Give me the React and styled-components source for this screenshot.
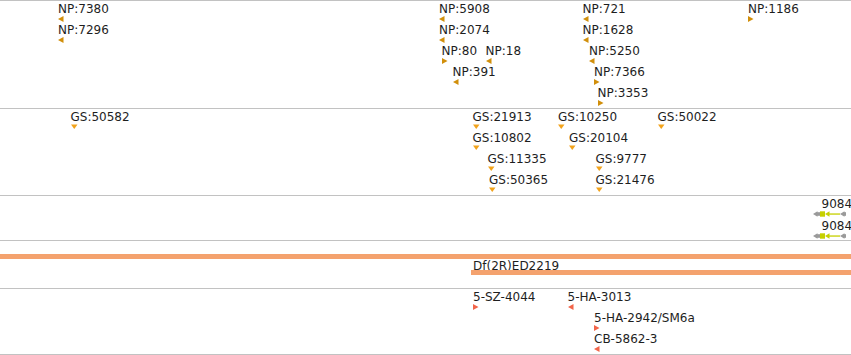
import React from "react"
import styled, { createGlobalStyle } from "styled-components"

const GlobalStyle = createGlobalStyle`
  html, body {
    margin: 0;
    padding: 0;
    background: #fff;
    overflow: hidden;
  }
  body {
    font-family: "DejaVu Sans", "Liberation Sans", sans-serif;
  }
`;

const COLORS = {
  np: "#d18f0b",
  gs: "#f2a31c",
  lab: "#f2654a",
  bar: "#f4a26e",
  gene: "#c6d000",
  geneGray: "#9a9a9a",
};

const npFeatures = [
  { label: "NP:7380", x: 58, row: 0, dir: "left" },
  { label: "NP:7296", x: 58, row: 1, dir: "left" },
  { label: "NP:5908", x: 439, row: 0, dir: "left" },
  { label: "NP:2074", x: 439, row: 1, dir: "left" },
  { label: "NP:80", x: 441.5, row: 2, dir: "right" },
  { label: "NP:18", x: 485.5, row: 2, dir: "left" },
  { label: "NP:391", x: 452.5, row: 3, dir: "left" },
  { label: "NP:721", x: 582.5, row: 0, dir: "left" },
  { label: "NP:1628", x: 582.5, row: 1, dir: "left" },
  { label: "NP:5250", x: 589, row: 2, dir: "left" },
  { label: "NP:7366", x: 594, row: 3, dir: "right" },
  { label: "NP:3353", x: 597.5, row: 4, dir: "right" },
  { label: "NP:1186", x: 748, row: 0, dir: "right" },
];

const gsFeatures = [
  { label: "GS:50582", x: 70.5, row: 0 },
  { label: "GS:21913", x: 472.5, row: 0 },
  { label: "GS:10802", x: 472.5, row: 1 },
  { label: "GS:11335", x: 487.5, row: 2 },
  { label: "GS:50365", x: 489, row: 3 },
  { label: "GS:10250", x: 558, row: 0 },
  { label: "GS:20104", x: 569, row: 1 },
  { label: "GS:9777", x: 595.5, row: 2 },
  { label: "GS:21476", x: 595.5, row: 3 },
  { label: "GS:50022", x: 657.5, row: 0 },
];

const labFeatures = [
  { label: "5-SZ-4044", x: 473, row: 0, dir: "right" },
  { label: "5-HA-3013", x: 567.5, row: 0, dir: "left" },
  { label: "5-HA-2942/SM6a", x: 594, row: 1, dir: "right" },
  { label: "CB-5862-3", x: 594, row: 2, dir: "left" },
];

// strand marker drawn under each label
function Arrow({ dir, color }) {
  if (dir === "down") {
    return (
      <ArrowSvg width="7" height="5" viewBox="0 0 7 5">
        <polygon points="0,0.5 6.5,0.5 3.25,5" fill={color} />
      </ArrowSvg>
    );
  }
  const points = dir === "left" ? "0,3 5.5,0 5.5,6" : "0,0 0,6 5.5,3";
  return (
    <ArrowSvg width="6" height="6" viewBox="0 0 6 6">
      <polygon points={points} fill={color} />
    </ArrowSvg>
  );
}

function Feature({ label, x, row, dir, color, rowHeight = 21 }) {
  return (
    <FeatureBox style={{ left: x, top: row * rowHeight + 1 }}>
      <Label>{label}</Label>
      <Arrow dir={dir} color={color} />
    </FeatureBox>
  );
}

function GeneGlyph() {
  return (
    <svg width="33" height="6" viewBox="0 0 33 6">
      <polygon points="0,3 4.5,0.3 4.5,5.7" fill={COLORS.geneGray} />
      <rect x="4" y="1.2" width="3.5" height="3.6" fill={COLORS.geneGray} />
      <rect x="7" y="0.3" width="5" height="5.4" fill={COLORS.gene} />
      <polygon points="12,3 16.5,0.3 16.5,5.7" fill={COLORS.gene} />
      <rect x="16" y="2.4" width="11" height="1.3" fill={COLORS.gene} />
      <polygon points="27,3 31.5,0.3 31.5,5.7" fill={COLORS.geneGray} />
      <rect x="31" y="1.2" width="2" height="3.6" fill={COLORS.geneGray} />
    </svg>
  );
}

export default function App() {
  return (
    <Page>
      <GlobalStyle />
      <Track $height={107}>
        {npFeatures.map((f) => (
          <Feature key={f.label + f.x} {...f} color={COLORS.np} />
        ))}
      </Track>
      <Track $height={86}>
        {gsFeatures.map((f) => (
          <Feature key={f.label} {...f} dir="down" color={COLORS.gs} />
        ))}
      </Track>
      <Track $height={44}>
        <GeneStack>
          {[0, 1].map((row) => (
            <GeneRow key={row}>
              <GeneLabel>9084</GeneLabel>
              <GeneGlyph />
            </GeneRow>
          ))}
        </GeneStack>
      </Track>
      <Track $height={47}>
        <Bar $top={13} $left={0} />
        <BarLabel>Df(2R)ED2219</BarLabel>
        <Bar $top={29} $left={471} />
      </Track>
      <Track $height={65} $last>
        {labFeatures.map((f) => (
          <Feature key={f.label} {...f} color={COLORS.lab} />
        ))}
      </Track>
    </Page>
  );
}

const Page = styled.div`
  width: 851px;
  height: 355px;
  display: flex;
  flex-direction: column;
  background: #fff;
`;

const Track = styled.div`
  position: relative;
  height: ${(p) => p.$height}px;
  flex: none;
  border-top: 1px solid #c2c2c2;
  border-bottom: ${(p) => (p.$last ? "1px solid #c2c2c2" : "none")};
  overflow: hidden;
`;

const FeatureBox = styled.div`
  position: absolute;
  display: flex;
  flex-direction: column;
  align-items: flex-start;
`;

const Label = styled.span`
  font-size: 12px;
  line-height: 14px;
  color: #1e1e1e;
  white-space: nowrap;
`;

const ArrowSvg = styled.svg`
  display: block;
`;

const GeneStack = styled.div`
  display: flex;
  flex-direction: column;
  gap: 2px;
  padding: 1px 0 0 813px;
`;

const GeneRow = styled.div`
  display: flex;
  flex-direction: column;
  align-items: flex-start;
  height: 20px;
`;

const GeneLabel = styled.span`
  margin-left: 8.5px;
  font-size: 12px;
  line-height: 14px;
  color: #1e1e1e;
  white-space: nowrap;
`;

const Bar = styled.div`
  position: absolute;
  top: ${(p) => p.$top}px;
  left: ${(p) => p.$left}px;
  right: 0;
  height: 5px;
  background: ${COLORS.bar};
`;

const BarLabel = styled.span`
  position: absolute;
  left: 473px;
  top: 17.5px;
  font-size: 12px;
  line-height: 14px;
  color: #1e1e1e;
  white-space: nowrap;
`;
